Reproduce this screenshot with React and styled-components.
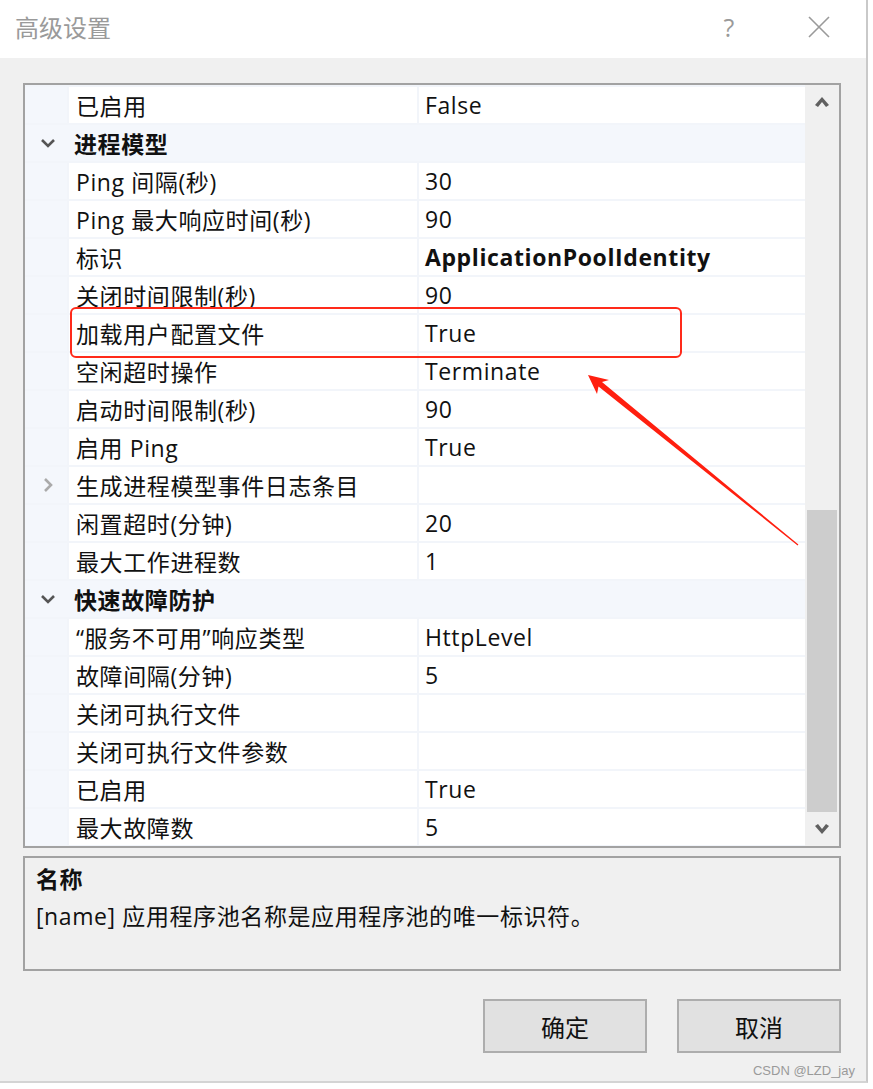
import React from "react";
import styled, { createGlobalStyle } from "styled-components";

const GlobalStyle = createGlobalStyle`
  html, body {
    margin: 0;
    padding: 0;
    background: #ffffff;
  }
  body {
    font-family: "Open Sans", "Noto Sans CJK SC", sans-serif;
  }
`;

const cjk = `"Open Sans", "Noto Sans CJK SC", sans-serif`;

const Window = styled.div`
  position: relative;
  width: 866px;
  height: 1081px;
  display: flex;
  flex-direction: column;
  border-right: 2px solid #c9c9c9;
  border-bottom: 2px solid #d4d4d4;
  background: #f0f0f0;
  font-family: ${cjk};
`;

const TitleBar = styled.div`
  height: 58px;
  flex: none;
  display: flex;
  align-items: center;
  background: #ffffff;
  padding-left: 15px;
`;

const Title = styled.div`
  flex: 1;
  font-size: 24px;
  color: #9a9a9a;
  line-height: 1;
  margin-top: -2px;
`;

const TitleButton = styled.div`
  width: ${(p) => p.$w}px;
  display: flex;
  justify-content: center;
  align-items: center;
  color: #9a9a9a;
  font-size: 25px;
  margin-top: -4px;
`;

const Body = styled.div`
  flex: 1;
  display: flex;
  flex-direction: column;
  padding: 25px 25px 0 23px;
`;

const Grid = styled.div`
  height: 761px;
  display: flex;
  border: 2px solid #a2a2a2;
  background: #ffffff;
`;

const Rows = styled.div`
  flex: 1;
  display: flex;
  flex-direction: column;
  gap: 2px;
  padding-top: 2px;
  background: #f2f5fa;
  overflow: hidden;
`;

const Row = styled.div`
  height: 36px;
  flex: none;
  display: grid;
  grid-template-columns: 42px 348px 1fr;
  column-gap: ${(p) => (p.$category ? 0 : 2)}px;
  background: #f2f5fa;
  font-size: 23px;
  letter-spacing: 0.6px;
  color: #111;
`;

const Gutter = styled.div`
  display: flex;
  align-items: center;
  justify-content: center;
  background: #f4f7fc;
  padding-left: 4px;
`;

const Cell = styled.div`
  display: flex;
  align-items: center;
  padding-left: ${(p) => (p.$value ? 6 : 7)}px;
  background: ${(p) => (p.$category ? "#f4f7fc" : "#ffffff")};
  font-weight: ${(p) => (p.$bold ? 700 : 400)};
  white-space: nowrap;
  grid-column: ${(p) => (p.$category ? "2 / 4" : "auto")};
`;

const ScrollBar = styled.div`
  width: 34px;
  flex: none;
  display: flex;
  flex-direction: column;
  background: #f0f0f0;
`;

const ArrowBtn = styled.div`
  height: 34px;
  flex: none;
  display: flex;
  align-items: center;
  justify-content: center;
`;

const Track = styled.div`
  flex: 1;
  display: flex;
  flex-direction: column;
  justify-content: flex-end;
  padding: 0 2px;
`;

const Thumb = styled.div`
  height: 302px;
  background: #cdcdcd;
`;

const Description = styled.div`
  box-sizing: border-box;
  margin-top: 8px;
  height: 115px;
  border: 2px solid #a2a2a2;
  padding: 7px 11px;
  font-size: 23px;
  letter-spacing: 0.6px;
  color: #111;
`;

const DescTitle = styled.div`
  font-weight: 700;
  line-height: 28px;
`;

const DescText = styled.div`
  margin-top: 9px;
  line-height: 28px;
`;

const Buttons = styled.div`
  display: flex;
  justify-content: flex-end;
  gap: 30px;
  margin-top: 28px;
`;

const Button = styled.button`
  box-sizing: border-box;
  width: 164px;
  height: 54px;
  background: #e1e1e1;
  border: 2px solid #adadad;
  font-family: ${cjk};
  font-size: 24px;
  color: #111;
  padding: 0;
`;

const Watermark = styled.div`
  position: absolute;
  right: 11px;
  bottom: 3px;
  font-family: "Liberation Sans", Arial, sans-serif;
  font-size: 13px;
  color: #9a9a9a;
`;

const Highlight = styled.div`
  position: absolute;
  left: 70px;
  top: 307px;
  width: 608px;
  height: 47px;
  border: 2px solid #ff2a1a;
  border-radius: 6px;
  pointer-events: none;
`;

const Overlay = styled.svg`
  position: absolute;
  left: 0;
  top: 0;
  pointer-events: none;
`;

const Chevron = ({ dir }) => {
  const rot = dir === "down" ? 0 : -90;
  return (
    <svg width="20" height="14" viewBox="0 0 20 14" style={{ transform: `rotate(${rot}deg)` }}>
      <polyline
        points="4,4 10,10 16,4"
        fill="none"
        stroke={dir === "down" ? "#555" : "#aaa"}
        strokeWidth="2.6"
      />
    </svg>
  );
};

const ScrollArrow = ({ up }) => (
  <svg width="16" height="12" viewBox="0 0 16 12" style={{ transform: up ? "none" : "rotate(180deg)" }}>
    <path d="M8 1 L15 9 L12 11 L8 6 L4 11 L1 9 Z" fill="#606060" />
  </svg>
);

const rows = [
  { name: "已启用", value: "False" },
  { category: "进程模型" },
  { name: "Ping 间隔(秒)", value: "30" },
  { name: "Ping 最大响应时间(秒)", value: "90" },
  { name: "标识", value: "ApplicationPoolIdentity", bold: true },
  { name: "关闭时间限制(秒)", value: "90" },
  { name: "加载用户配置文件", value: "True" },
  { name: "空闲超时操作", value: "Terminate" },
  { name: "启动时间限制(秒)", value: "90" },
  { name: "启用 Ping", value: "True" },
  { name: "生成进程模型事件日志条目", value: "", collapsed: true },
  { name: "闲置超时(分钟)", value: "20" },
  { name: "最大工作进程数", value: "1" },
  { category: "快速故障防护" },
  { name: "“服务不可用”响应类型", value: "HttpLevel" },
  { name: "故障间隔(分钟)", value: "5" },
  { name: "关闭可执行文件", value: "" },
  { name: "关闭可执行文件参数", value: "" },
  { name: "已启用", value: "True" },
  { name: "最大故障数", value: "5" },
];

export default function App() {
  return (
    <>
      <GlobalStyle />
      <Window>
        <TitleBar>
          <Title>高级设置</Title>
          <TitleButton $w={62} style={{ marginRight: 29 }}>?</TitleButton>
          <TitleButton $w={60} style={{ marginRight: 17 }}>
            <svg width="22" height="22" viewBox="0 0 22 22">
              <path d="M1 1 L21 21 M21 1 L1 21" stroke="#9a9a9a" strokeWidth="1.6" />
            </svg>
          </TitleButton>
        </TitleBar>
        <Body>
          <Grid>
            <Rows>
              {rows.map((r, i) =>
                r.category ? (
                  <Row key={i} $category>
                    <Gutter>
                      <Chevron dir="down" />
                    </Gutter>
                    <Cell $category $bold>
                      {r.category}
                    </Cell>
                  </Row>
                ) : (
                  <Row key={i}>
                    <Gutter>{r.collapsed && <Chevron dir="right" />}</Gutter>
                    <Cell>{r.name}</Cell>
                    <Cell $value $bold={r.bold}>
                      {r.value}
                    </Cell>
                  </Row>
                )
              )}
            </Rows>
            <ScrollBar>
              <ArrowBtn>
                <ScrollArrow up />
              </ArrowBtn>
              <Track>
                <Thumb />
              </Track>
              <ArrowBtn>
                <ScrollArrow />
              </ArrowBtn>
            </ScrollBar>
          </Grid>
          <Description>
            <DescTitle>名称</DescTitle>
            <DescText>[name] 应用程序池名称是应用程序池的唯一标识符。</DescText>
          </Description>
          <Buttons>
            <Button>确定</Button>
            <Button>取消</Button>
          </Buttons>
        </Body>
        <Watermark>CSDN @LZD_jay</Watermark>
        <Highlight />
        <Overlay width="866" height="1081">
          <polygon
            points="588,375 609,380 602,382 798.4,544.6 797.6,545.4 598.5,386.5 597,394"
            fill="#ff1f0f"
          />
        </Overlay>
      </Window>
    </>
  );
}
